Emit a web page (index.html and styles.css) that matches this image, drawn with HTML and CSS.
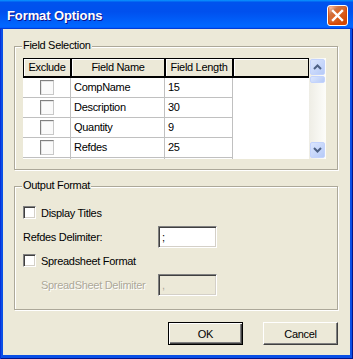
FILE: index.html
```html
<!DOCTYPE html>
<html>
<head>
  <title>Format Options</title>
  <link rel="stylesheet" href="styles.css">
</head>
<body>
  <div class="window">
    <div class="titlebar">
      <span class="title">Format Options</span>
      <button class="close">
        <svg width="19" height="19" viewBox="0 0 19 19">
          <path d="M5 5 L14 14 M14 5 L5 14" stroke="#fff" stroke-width="2.4" stroke-linecap="square" fill="none"/>
        </svg>
      </button>
    </div>

    <div class="frame">
      <div class="group group-fields">
        <span class="legend">Field Selection</span>
        <div class="grid">
          <div class="grid-main">
            <div class="grid-head">
              <div class="hcell">Exclude</div>
              <div class="hcell">Field Name</div>
              <div class="hcell">Field Length</div>
              <div class="hcell"></div>
            </div>
            <div class="grid-row">
              <div class="cell cell-check"><span class="box"></span></div>
              <div class="cell">CompName</div>
              <div class="cell">15</div>
              <div class="filler"></div>
            </div>
            <div class="grid-row">
              <div class="cell cell-check"><span class="box"></span></div>
              <div class="cell">Description</div>
              <div class="cell">30</div>
              <div class="filler"></div>
            </div>
            <div class="grid-row">
              <div class="cell cell-check"><span class="box"></span></div>
              <div class="cell">Quantity</div>
              <div class="cell">9</div>
              <div class="filler"></div>
            </div>
            <div class="grid-row">
              <div class="cell cell-check"><span class="box"></span></div>
              <div class="cell">Refdes</div>
              <div class="cell">25</div>
              <div class="filler"></div>
            </div>
            <div class="grid-row">
              <div class="cell"></div>
              <div class="cell"></div>
              <div class="cell"></div>
              <div class="filler"></div>
            </div>
          </div>
          <div class="scrollbar">
            <div class="sb-btn">
              <svg width="9" height="6" viewBox="0 0 9 6"><path d="M1 5 L4.5 1.5 L8 5" stroke="#4d6185" stroke-width="2" fill="none"/></svg>
            </div>
            <div class="sb-thumb"></div>
            <div class="sb-track"></div>
            <div class="sb-btn">
              <svg width="9" height="6" viewBox="0 0 9 6"><path d="M1 1 L4.5 4.5 L8 1" stroke="#4d6185" stroke-width="2" fill="none"/></svg>
            </div>
          </div>
        </div>
      </div>

      <div class="group group-output">
        <span class="legend">Output Format</span>
        <div class="opt-row check-row">
          <span class="check"></span>
          <span>Display Titles</span>
        </div>
        <div class="opt-row field-row row-gap">
          <span class="label">Refdes Delimiter:</span>
          <span class="textbox">;</span>
        </div>
        <div class="opt-row check-row row-gap-sm">
          <span class="check"></span>
          <span>Spreadsheet Format</span>
        </div>
        <div class="opt-row field-row row-gap">
          <span class="label label-indent disabled">SpreadSheet Delimiter</span>
          <span class="textbox textbox-disabled">,</span>
        </div>
      </div>

      <div class="buttons">
        <button class="btn btn-default">OK</button>
        <button class="btn">Cancel</button>
      </div>
    </div>
  </div>
</body>
</html>
```

FILE: styles.css
```css
* {
  box-sizing: border-box;
}

body {
  margin: 0;
  font-family: "Liberation Sans", Arial, sans-serif;
  font-size: 11px;
  letter-spacing: -0.3px;
  color: #000;
  background-color: #fff;
}

.window {
  width: 353px;
  height: 359px;
  display: flex;
  flex-direction: column;
  background-color: #0a4fe6;
  box-shadow: inset 1px 0 #0831d9, inset -1px -1px #00138c;
}

.titlebar {
  height: 29px;
  display: flex;
  align-items: center;
  padding: 2px 5px 0 7px;
  background: linear-gradient(180deg, #0997ff, #0053ee 8%, #0050ee 40%, #0066ff 88%, #0066ff 93%, #005bff 95%, #003dd7 96%, #003dd7);
}

.title {
  color: #fff;
  font-size: 13px;
  font-weight: bold;
  letter-spacing: -0.1px;
  text-shadow: 1px 1px #0f1089;
}

.close {
  margin-left: auto;
  width: 21px;
  height: 21px;
  padding: 0;
  display: flex;
  align-items: center;
  justify-content: center;
  border: 1px solid #fff;
  border-radius: 3px;
  background: radial-gradient(circle at 90% 90%, #cc4600 0%, #dc6527 55%, #cd7546 70%, #ffccb2 90%, #fff 100%);
  box-shadow: inset 0 -1px 2px 1px #da4600;
}

.frame {
  flex: 1;
  margin: 0 3px 4px;
  padding: 17px 12px 0 11px;
  background-color: #ece9d8;
}

/* group boxes */
.group {
  position: relative;
  height: 124px;
  border: 1px solid #aca899;
  box-shadow: inset 1px 1px #fff, 1px 1px #fff;
}

.legend {
  position: absolute;
  top: -8px;
  left: 7px;
  padding: 0 1px;
  line-height: 13px;
  background-color: #ece9d8;
}

.group-fields {
  padding: 11px 0 0 8px;
}

.group-output {
  margin-top: 16px;
  padding: 17px 0 0 8px;
}

/* list grid */
.grid {
  display: flex;
  width: 303px;
  height: 101px;
}

.grid-main {
  width: 286px;
  height: 101px;
  overflow: hidden;
  background-color: #fff;
}

.grid-head,
.grid-row {
  display: grid;
  grid-template-columns: 48px 94px 68px 76px;
}

.hcell {
  height: 20px;
  border: 1px solid #000;
  border-bottom-width: 2px;
  background-color: #ece9d8;
  box-shadow: inset 1px 1px #fff;
  text-align: center;
  line-height: 17px;
}

.grid-row {
  height: 20px;
}

.cell {
  border-right: 1px solid #c0c0c0;
  border-bottom: 1px solid #c0c0c0;
  padding-left: 3px;
  line-height: 19px;
}

.cell-check {
  display: flex;
  align-items: center;
  justify-content: center;
  padding-left: 0;
}

.box {
  width: 14px;
  height: 15px;
  border: 1px solid;
  border-color: #808080 #c8c8c8 #c8c8c8 #808080;
  box-shadow: inset 1px 1px #e4e4e4;
  background-color: #fafafa;
}

.scrollbar {
  width: 17px;
  display: flex;
  flex-direction: column;
  padding: 1px;
  background: linear-gradient(to right, #eeede5, #fdfdfa);
}

.sb-btn,
.sb-thumb {
  border: 1px solid #c3d3fd;
  border-radius: 2px;
  background: linear-gradient(135deg, #dbe6fe, #b6caf7);
}

.sb-btn {
  height: 16px;
  display: flex;
  align-items: center;
  justify-content: center;
}

.sb-thumb {
  height: 7px;
  margin-top: 1px;
}

.sb-track {
  flex: 1;
}

/* output format */
.opt-row {
  display: flex;
  align-items: center;
}

.check-row {
  height: 17px;
}

.field-row {
  height: 22px;
}

.row-gap {
  margin-top: 5px;
}

.row-gap-sm {
  margin-top: 4px;
}

.check {
  width: 13px;
  height: 13px;
  margin-right: 5px;
  border: 1px solid;
  border-color: #808080 #fff #fff #808080;
  box-shadow: inset 1px 1px #404040, inset -1px -1px #d4d0c8;
  background-color: #fff;
}

.label {
  width: 135px;
}

.label-indent {
  width: 117px;
  margin-left: 18px;
}

.disabled {
  color: #aca899;
  text-shadow: 1px 1px #fff;
}

.textbox {
  width: 59px;
  height: 22px;
  padding-left: 3px;
  line-height: 20px;
  border: 1px solid;
  border-color: #808080 #fff #fff #808080;
  box-shadow: inset 1px 1px #404040, inset -1px -1px #d4d0c8;
  background-color: #fff;
}

.textbox-disabled {
  background-color: #ece9d8;
  color: #aca899;
}

/* dialog buttons */
.buttons {
  display: flex;
  justify-content: flex-end;
  gap: 20px;
  margin-top: 12px;
}

.btn {
  width: 75px;
  height: 23px;
  padding: 0;
  font-family: inherit;
  font-size: 11px;
  letter-spacing: -0.3px;
  color: #000;
  background-color: #ece9d8;
  border: 1px solid;
  border-color: #fff #404040 #404040 #fff;
  box-shadow: inset -1px -1px #808080;
}

.btn-default {
  border-color: #000;
  box-shadow: inset 1px 1px #fff, inset -1px -1px #404040, inset -2px -2px #808080;
}
```
